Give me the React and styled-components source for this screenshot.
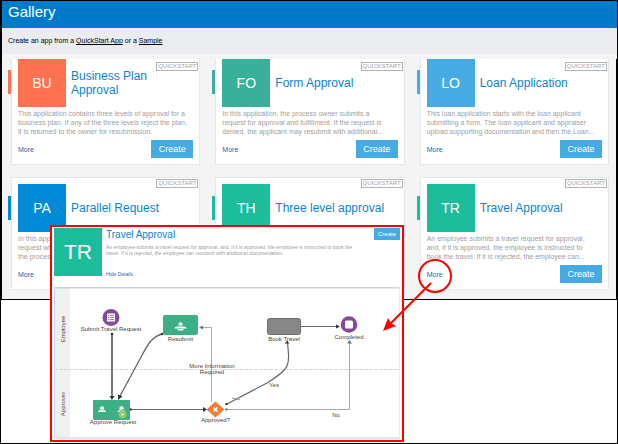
import React from 'react';
import styled, { createGlobalStyle, css } from 'styled-components';

const GlobalStyle = createGlobalStyle`
  * {
    box-sizing: border-box;
  }
  body {
    margin: 0;
    background: #fff;
    font-family: "Liberation Sans", Arial, sans-serif;
  }
  h1, h2, p {
    margin: 0;
    font-weight: 400;
  }
`;

const Page = styled.div`
  position: relative;
  min-height: 100vh;
  border: 1px solid #000;
`;

const GalleryPanel = styled.main`
  border-left: 1px solid #000;
  border-bottom: 1px solid #000;
  background: #f4f4f4;
`;

const Header = styled.header`
  display: flex;
  align-items: center;
  height: 27px;
  padding: 0 6px 6px;
  background: #007bc8;
  h1 {
    color: #fff;
    font-size: 15px;
    line-height: 18px;
  }
`;

const Intro = styled.p`
  padding: 8px 6px;
  background: #ebecef;
  color: #000;
  font-size: 7px;
  line-height: 10px;
  a {
    color: inherit;
  }
`;

const CardGrid = styled.div`
  display: grid;
  grid-template-columns: repeat(3, 1fr);
  gap: 12px;
  margin-top: 5px;
  padding: 0 7px 9px 6px;
  border-right: 1px solid #000;
`;

const Item = styled.article`
  display: flex;
  min-width: 0;
`;

const Accent = styled.span`
  flex: none;
  width: 3px;
  height: 24px;
  margin-top: ${({ $flush }) => ($flush ? '11px' : '19px')};
  background: ${({ $color }) => $color};
`;

const Card = styled.div`
  position: relative;
  flex: 1;
  min-width: 0;
  padding: 6px;
  border: 1px solid #e6e9ea;
  background: #fff;
  ${({ $flush }) =>
    $flush &&
    css`
      padding-top: 0;
      border-top: 0;
    `}
`;

const Badge = styled.span`
  position: absolute;
  top: ${({ $flush }) => ($flush ? '3px' : '1px')};
  right: 1px;
  padding: 0 1px;
  border: 1px solid #b2b2b2;
  color: #a4a4a4;
  font-size: 6px;
  line-height: 7px;
`;

const CardHead = styled.div`
  display: flex;
  align-items: center;
  gap: 5px;
`;

const Tile = styled.div`
  display: flex;
  flex: none;
  align-items: center;
  justify-content: center;
  width: 48px;
  height: 48px;
  background: ${({ $color }) => $color};
  color: #fff;
  font-size: ${({ $large }) => ($large ? '21px' : '14px')};
`;

const Title = styled.h2`
  max-width: 110px;
  color: #0b84cc;
  font-size: 12px;
  line-height: 14px;
`;

const Description = styled.p`
  margin-top: 2px;
  color: #a0a0a0;
  font-size: 7px;
  line-height: 9px;
  white-space: nowrap;
`;

const CardFoot = styled.div`
  display: flex;
  align-items: center;
  justify-content: space-between;
  margin-top: 4px;
`;

const MoreLink = styled.a`
  color: #1767b0;
  font-size: 7px;
  text-decoration: none;
`;

const CreateButton = styled.button`
  flex: none;
  width: 42px;
  height: 18px;
  padding: 0;
  border: 0;
  background: #46abe3;
  color: #fff;
  font-family: inherit;
  font-size: 9px;
`;

// Details window that opens over the gallery
const Popup = styled.section`
  position: absolute;
  top: 224px;
  left: 49px;
  right: 213px;
  padding: 1px 2px;
  border: 2px solid #fe0000;
  background: #fff;
`;

const PopupHead = styled.div`
  display: flex;
  align-items: flex-start;
  gap: 4px;
  margin-bottom: 10px;
`;

const PopupText = styled.div`
  flex: 1;
  min-width: 0;
  h2 {
    color: #0b84cc;
    font-size: 10px;
    line-height: 14px;
  }
  p {
    margin: 2px 0 15px;
    color: #a0a0a0;
    font-size: 5px;
    line-height: 6px;
    white-space: nowrap;
  }
  a {
    display: block;
    color: #1767b0;
    font-size: 5px;
    line-height: 6px;
    text-decoration: none;
  }
`;

const SmallButton = styled(CreateButton)`
  width: 26px;
  height: 12px;
  margin-left: -30px;
  font-size: 6px;
`;

const Flow = styled.svg`
  display: block;
  width: 100%;
  height: auto;
  text {
    fill: #444;
    font-size: 6px;
    text-anchor: middle;
  }
`;

const Callout = styled.svg`
  position: absolute;
  top: 255px;
  right: 161px;
  width: 75px;
  height: 80px;
  pointer-events: none;
`;

const apps = [
  {
    code: 'BU',
    color: '#ff7150',
    title: 'Business Plan Approval',
    lines: [
      'This application contains three levels of approval for a',
      'business plan. If any of the three levels reject the plan,',
      'it is returned to the owner for resubmission.',
    ],
  },
  {
    code: 'FO',
    color: '#39b09a',
    title: 'Form Approval',
    lines: [
      'In this application, the process owner submits a',
      'request for approval and fulfillment. If the request is',
      'denied, the applicant may resubmit with additional...',
    ],
  },
  {
    code: 'LO',
    color: '#46abe3',
    title: 'Loan Application',
    lines: [
      'This loan application starts with the loan applicant',
      'submitting a form. The loan applicant and appraiser',
      'upload supporting documentation and then the Loan...',
    ],
  },
  {
    code: 'PA',
    color: '#008ad5',
    title: 'Parallel Request',
    lines: ['In this app', 'request wh', 'the proces'],
  },
  {
    code: 'TH',
    color: '#1dbd9c',
    title: 'Three level approval',
    lines: [],
  },
  {
    code: 'TR',
    color: '#1dbd9c',
    title: 'Travel Approval',
    lines: [
      'An employee submits a travel request for approval,',
      'and, if it is approved, the employee is instructed to',
      'book the travel. If it is rejected, the employee can...',
    ],
  },
];

const AppCard = ({ app, flush }) => (
  <Item>
    <Accent $color={app.color} $flush={flush} />
    <Card $flush={flush}>
      <Badge $flush={flush}>QUICKSTART</Badge>
      <CardHead>
        <Tile $color={app.color}>{app.code}</Tile>
        <Title>{app.title}</Title>
      </CardHead>
      <Description>
        {app.lines.map(line => (
          <React.Fragment key={line}>
            {line}
            <br />
          </React.Fragment>
        ))}
      </Description>
      <CardFoot>
        <MoreLink href="#more">More</MoreLink>
        <CreateButton type="button">Create</CreateButton>
      </CardFoot>
    </Card>
  </Item>
);

const Person = ({ x, y }) => (
  <g transform={`translate(${x} ${y})`} fill="#fff">
    <path d="M-2.2 -1 L-1.8 -3.5 Q0 -4.8 1.8 -3.5 L2.2 -1 Z" />
    <path d="M-4 1.5 Q-4 0 -2 -0.3 H2 Q4 0 4 1.5 Z" />
  </g>
);

const FlowDiagram = () => (
  <Flow viewBox="54 287 346 152" role="img" aria-label="Travel approval process">
    <rect x="54" y="287" width="346" height="152" fill="#fff" />
    <rect x="54" y="287" width="16" height="151" fill="#f0f0f0" />
    <path d="M54 287.5 H400" stroke="#d2d2d2" strokeWidth="2" />
    <path d="M54.5 287 V438" stroke="#c9d8e6" />
    <path d="M399.5 287 V438" stroke="#e8edf2" />
    <path d="M54 438 H400" stroke="#dce8f4" strokeWidth="2" />
    <path d="M54 369.5 H400" stroke="#d5d8dc" strokeDasharray="4 1" />
    <text transform="translate(65 329) rotate(-90)">Employee</text>
    <text transform="translate(65 404) rotate(-90)">Approver</text>

    {/* connectors */}
    <g fill="none" stroke="#666">
      <path d="M112 334 V397" stroke="#777" strokeWidth="2" />
      <path d="M162 334 C151 337 147 346 140 359 L120 396" strokeWidth="1.3" />
      <path d="M130 409.5 H204" />
      <path d="M211.5 402 V327.5 H200" stroke="#aaa" />
      <path d="M301 326.5 H338" />
      <path d="M227 404 L267 383 C290 369 290 366 287.5 343" strokeWidth="1.2" />
      <path d="M232 398 L240 399.5" stroke="#999" />
      <path d="M227 409.5 H349.5 V342" stroke="#aaa" />
    </g>
    <g fill="#333">
      <path d="M109.5 396 H114.5 L112 400 Z" />
      <path d="M118 394.5 L122.5 396.5 L118 400 Z" />
      <path d="M203 407 L207 409.5 L203 412 Z" />
      <path d="M336 324.5 L340 326.5 L336 328.5 Z" />
      <path d="M285 343.5 H289.5 L287 340.5 Z" />
      <path d="M203 325.5 L199 327.5 L203 329.5 Z" fill="#777" />
      <path d="M347 343.5 H352 L349.5 340 Z" fill="#777" />
      <circle cx="112" cy="334" r="1.3" />
      <circle cx="162" cy="334" r="1.3" />
      <circle cx="130.5" cy="409.5" r="1.3" />
      <circle cx="226.5" cy="404" r="1.2" />
      <circle cx="226.5" cy="409.5" r="1.2" fill="#777" />
    </g>

    {/* start */}
    <circle cx="111" cy="317.5" r="8.5" fill="#864a9b" />
    <rect x="107" y="313.5" width="8" height="8" rx="0.6" fill="#fff" />
    <path
      d="M108 315.5 H109.2 M110.2 315.5 H114 M108 317.5 H109.2 M110.2 317.5 H114 M108 319.5 H109.2 M110.2 319.5 H114"
      stroke="#864a9b"
      strokeWidth="0.8"
    />
    <text x="111" y="331">Submit Travel Request</text>

    {/* tasks */}
    <rect x="163" y="315" width="35" height="20" rx="2" fill="#3caf84" />
    <g fill="#fff">
      <path d="M178.3 325.5 L178.8 323 Q180.5 321.5 182.2 323 L182.7 325.5 Z" />
      <path d="M174.5 328.5 Q174.5 326.7 177 326.5 H184 Q186.5 326.7 186.5 328.5 Z" />
      <path d="M177 329 H184 L182.5 330.5 H178.5 Z" />
    </g>
    <text x="180.5" y="341">Resubmit</text>

    <rect x="93" y="400" width="37" height="20" rx="1" fill="#3caf84" />
    <Person x={102} y={410.5} />
    <Person x={121.5} y={410.5} />
    <circle cx="122.5" cy="414.5" r="4.3" fill="#7bbf52" />
    <circle cx="122.5" cy="414.5" r="2.8" fill="none" stroke="#b6dc9a" strokeWidth="0.7" />
    <path d="M121.5 413 L124.5 414.5 L121.5 416 Z" fill="#fff" />
    <text x="113" y="424">Approve Request</text>

    <rect x="267.5" y="318.5" width="33" height="16" rx="2" fill="#878787" stroke="#6b6b6b" />
    <text x="284" y="341">Book Travel</text>

    {/* gateway */}
    <path d="M215.5 401.5 L224.5 409.5 L215.5 417.5 L206.5 409.5 Z" fill="#ee7f37" />
    <path d="M213.5 407.5 L217.5 411.5 M217.5 407.5 L213.5 411.5" stroke="#fff" strokeWidth="1.5" />
    <text x="215.5" y="422">Approved?</text>
    <text x="212" y="368">More Information</text>
    <text x="212" y="374">Required</text>
    <text x="274" y="387">Yes</text>
    <text x="336" y="417">No</text>

    {/* end */}
    <circle cx="349" cy="324.5" r="8.3" fill="#864a9b" />
    <rect x="345" y="320.5" width="8" height="8" rx="1.5" fill="#fff" />
    <text x="349" y="339">Completed</text>
  </Flow>
);

const TravelPopup = () => (
  <Popup>
    <PopupHead>
      <Tile $color="#1dbd9c" $large>
        TR
      </Tile>
      <PopupText>
        <h2>Travel Approval</h2>
        <p>
          An employee submits a travel request for approval, and, if it is
          approved, the employee is instructed to book the
          <br />
          travel. If it is rejected, the employee can resubmit with additional
          documentation.
        </p>
        <a href="#details">Hide Details</a>
      </PopupText>
      <SmallButton type="button">Create</SmallButton>
    </PopupHead>
    <FlowDiagram />
  </Popup>
);

const App = () => (
  <Page>
    <GlobalStyle />
    <GalleryPanel>
      <Header>
        <h1>Gallery</h1>
      </Header>
      <Intro>
        Create an app from a <a href="#quickstart">QuickStart App</a> or a{' '}
        <a href="#sample">Sample</a>
      </Intro>
      <CardGrid>
        {apps.map((app, i) => (
          <AppCard key={app.code} app={app} flush={i < 3} />
        ))}
      </CardGrid>
    </GalleryPanel>
    <TravelPopup />
    <Callout viewBox="381 256 75 80" aria-hidden="true">
      <circle cx="435" cy="276" r="16" fill="none" stroke="#fe0000" strokeWidth="2" />
      <path d="M431 283 L390 324" stroke="#fe0000" strokeWidth="2" />
      <path d="M383 331 L388 318 L391 323 L396 326 Z" fill="#fe0000" />
    </Callout>
  </Page>
);

export default App;
